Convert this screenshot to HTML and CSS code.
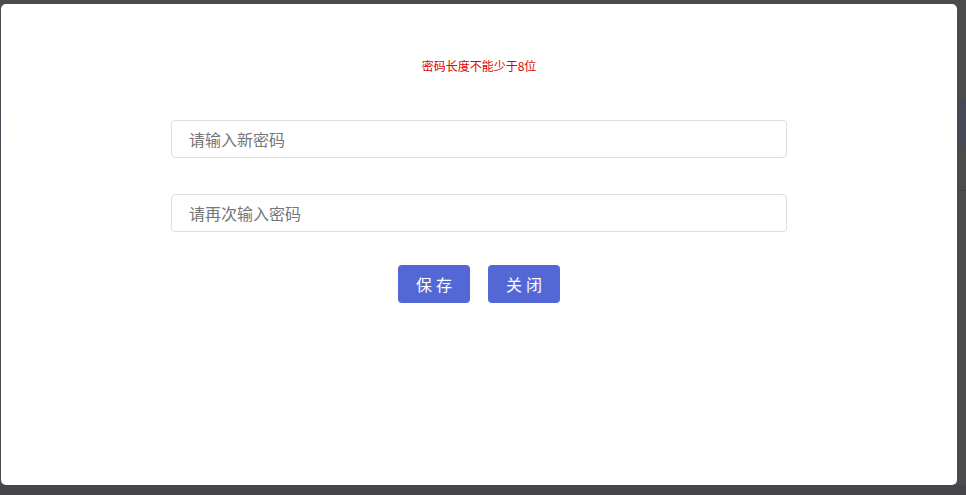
FILE: index.html
```html
<!DOCTYPE html>
<html lang="zh">
<head>
<meta charset="utf-8">
<title>修改密码</title>
<link rel="stylesheet" href="styles.css">
</head>
<body>
<div class="page">
  <div class="band"></div>
  <div class="rule"></div>
</div>
<div class="overlay">
  <div class="modal">
    <p class="error">密码长度不能少于8位</p>
    <form class="form">
      <input class="field" type="password" placeholder="请输入新密码">
      <input class="field" type="password" placeholder="请再次输入密码">
      <div class="actions">
        <button type="button" class="btn">保存</button>
        <button type="button" class="btn">关闭</button>
      </div>
    </form>
  </div>
</div>
</body>
</html>
```
FILE: styles.css
```css
html, body {
  margin: 0;
  padding: 0;
  height: 100%;
}
body {
  background: #45464a;
  font-family: "Noto Sans CJK SC", "Noto Sans", sans-serif;
  overflow: hidden;
}
.page {
  height: 485px;
  background: #4b4b4b;
  display: flex;
  flex-direction: column;
}
.band {
  margin-top: 100px;
  height: 46px;
  background: #474855;
}
.rule {
  margin-top: 44px;
  height: 1px;
  background: #414141;
}
.overlay {
  position: fixed;
  inset: 0;
}
.modal {
  position: absolute;
  left: 1px;
  top: 4px;
  width: 956px;
  height: 481px;
  background: #fff;
  border-radius: 5px;
  display: flex;
  flex-direction: column;
  align-items: center;
  box-sizing: border-box;
  padding-top: 54px;
}
.error {
  margin: 0;
  font-size: 12px;
  line-height: 16px;
  color: #e00000;
}
.form {
  margin-top: 46px;
  display: flex;
  flex-direction: column;
  align-items: center;
}
.field {
  width: 616px;
  height: 38px;
  box-sizing: border-box;
  border: 1px solid #dedede;
  border-radius: 4px;
  padding: 0 17px;
  font-family: inherit;
  font-size: 16px;
  color: #333;
  outline: none;
  margin: 0 0 36px;
}
.field::placeholder {
  color: #767676;
}
.field:nth-of-type(2) {
  margin-bottom: 33px;
}
.actions {
  display: flex;
  gap: 18px;
}
.btn {
  width: 72px;
  height: 38px;
  border: 0;
  border-radius: 4px;
  background: #5468d5;
  color: #fff;
  font-family: inherit;
  font-size: 16px;
  letter-spacing: 4px;
  padding: 0 0 0 4px;
  cursor: pointer;
}
```
